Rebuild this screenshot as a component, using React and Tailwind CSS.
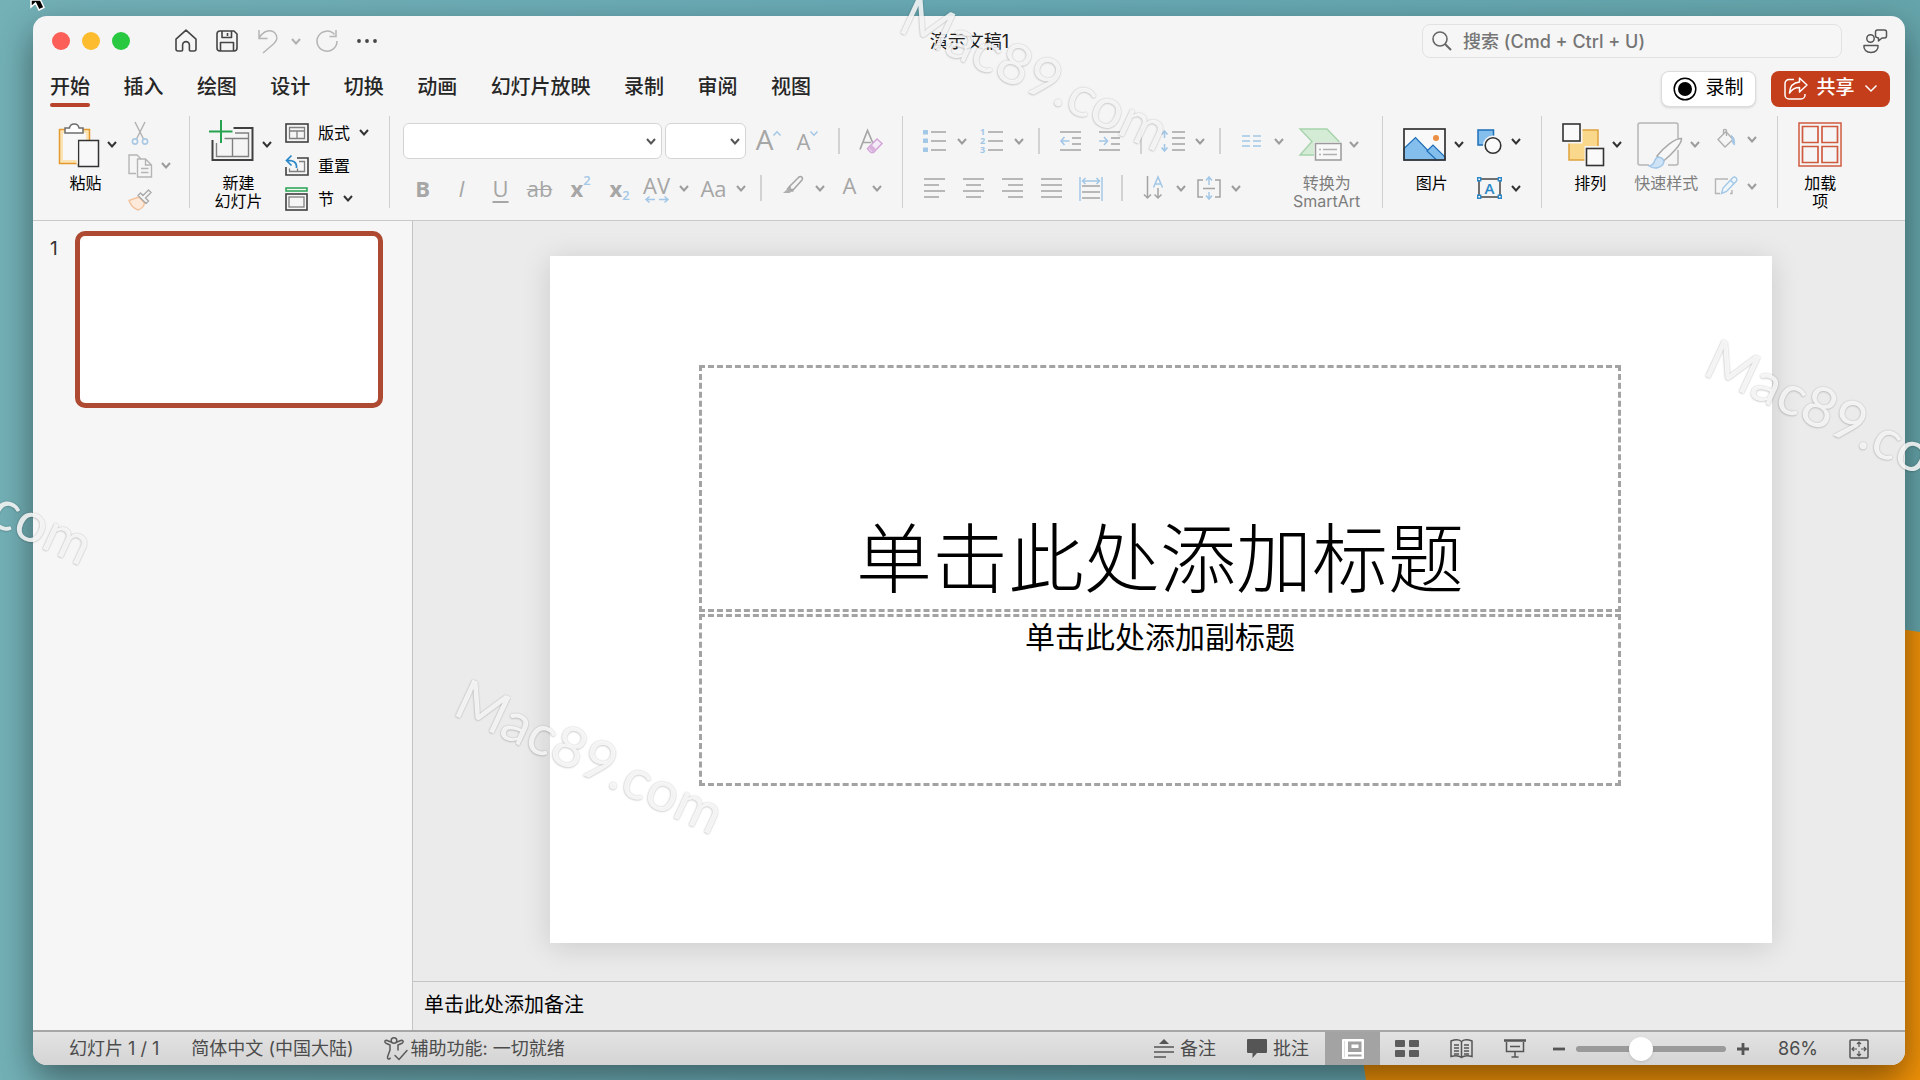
import { useState } from "react";
import clsx from "clsx";

const TABS = ["开始", "插入", "绘图", "设计", "切换", "动画", "幻灯片放映", "录制", "审阅", "视图"];

const WATERMARKS = [
  "left-[893px] -top-[19px]",
  "left-[1698px] top-[324px]",
  "left-[448px] top-[664px]",
  "-left-[183px] top-[395px]",
];

function Svg({ w, h, children, className }) {
  return (
    <svg
      width={w}
      height={h}
      viewBox={`0 0 ${w} ${h}`}
      fill="none"
      aria-hidden="true"
      className={clsx("shrink-0 overflow-visible", className)}
    >
      {children}
    </svg>
  );
}

function Chevron({ className = "text-[#333]" }) {
  return (
    <Svg w={10} h={7} className={className}>
      <path d="M1 1l4 4.5L9 1" stroke="currentColor" strokeWidth="2" />
    </Svg>
  );
}

const OFF = "text-[#9c9c9c]";

function Divider() {
  return <div className="h-[92px] w-px shrink-0 bg-[#cfcfcf]" />;
}

function SmallDivider() {
  return <div className="mx-[11px] h-[26px] w-0.5 shrink-0 bg-[#d2d2d2]" />;
}

// tool cell used in the font and paragraph groups
function Tool({ label, children, className }) {
  return (
    <button
      type="button"
      aria-label={label}
      className={clsx(
        "flex h-9 w-[39px] shrink-0 items-center justify-center font-['Open_Sans',sans-serif] text-[22px] leading-none text-[#a6a6a6]",
        className
      )}
    >
      {children}
    </button>
  );
}

function ToolArrow({ label }) {
  return (
    <button type="button" aria-label={label} className="flex h-9 w-4 shrink-0 items-center justify-center">
      <Chevron className={OFF} />
    </button>
  );
}

function BigButton({ icon, lines, arrow = true, off = false }) {
  return (
    <button type="button" className="flex shrink-0 flex-col items-center pt-1.5">
      <span className="flex h-[45px] items-center gap-2">
        {icon}
        {arrow && <Chevron className={off ? OFF : "text-[#333]"} />}
      </span>
      <span
        className={clsx(
          "mt-[7px] flex flex-col text-base leading-[18px]",
          off ? "text-[#7d7d7d]" : "text-black",
          arrow && "pr-1"
        )}
      >
        {lines.map((l) => (
          <span key={l}>{l}</span>
        ))}
      </span>
    </button>
  );
}

function SmallButton({ icon, text, label, arrow, off, className }) {
  return (
    <button
      type="button"
      aria-label={label}
      className={clsx("flex items-center gap-[9px] text-base text-black", className)}
    >
      {icon}
      {text && <span>{text}</span>}
      {arrow && <Chevron className={off ? OFF : "text-[#333]"} />}
    </button>
  );
}

/* ---------- icons ---------- */

const HomeIcon = () => (
  <Svg w={22} h={24}>
    <path
      d="M1 10.2 11 1.2l10 9V20a2 2 0 0 1-2 2h-3.6a1 1 0 0 1-1-1v-5a3.4 3.4 0 0 0-6.8 0v5a1 1 0 0 1-1 1H3a2 2 0 0 1-2-2z"
      stroke="#454545"
      strokeWidth="1.6"
      strokeLinejoin="round"
    />
  </Svg>
);

const SaveIcon = () => (
  <Svg w={22} h={22}>
    <path
      d="M1 4a3 3 0 0 1 3-3h14l3 3v14a3 3 0 0 1-3 3H4a3 3 0 0 1-3-3zM6 1v6.5h9.5V1M11.5 3v3M4.5 21v-8.500h13V21"
      stroke="#454545"
      strokeWidth="1.6"
      strokeLinejoin="round"
    />
  </Svg>
);

const UndoIcon = () => (
  <Svg w={22} h={25}>
    <path d="M2 1v8.500h8.500M2 9C6 2.500 13-.5 17.500 3.500c4 4 2.500 8-.5 11L6 24" stroke="#b5b5b5" strokeWidth="1.5" />
  </Svg>
);

const RedoIcon = () => (
  <Svg w={22} h={22}>
    <path d="M18.500 4.500A10 10 0 1 0 21 11M20 0v6.500h-6.500" stroke="#b5b5b5" strokeWidth="1.5" />
  </Svg>
);

const PasteIcon = () => (
  <Svg w={41} h={45}>
    <rect x="1.500" y="7.500" width="30" height="34" fill="#fbe3b4" stroke="#e49a2e" strokeWidth="1.5" />
    <rect x="5" y="11" width="23" height="27" fill="#f8f8f8" />
    <path d="M7 11V6h4.500a4.800 4.800 0 0 1 9.500 0H25v5z" fill="#fff" stroke="#6d6d6d" strokeWidth="1.5" />
    <rect x="20.500" y="18.500" width="20" height="26" fill="#f8f8f8" stroke="#333" strokeWidth="1.5" />
    <rect x="18.500" y="17" width="1.300" height="25" fill="#f5f5f5" />
  </Svg>
);

const CutIcon = () => (
  <Svg w={24} h={24}>
    <path d="M7 1l8.500 17M17 1L8.500 18" stroke="#b0b0b0" strokeWidth="1.400" />
    <circle cx="7" cy="20.500" r="2.600" stroke="#a9c9e4" strokeWidth="1.600" />
    <circle cx="17" cy="20.500" r="2.600" stroke="#a9c9e4" strokeWidth="1.600" />
  </Svg>
);

const CopyIcon = () => (
  <Svg w={24} h={24}>
    <path d="M8 19.500H1V1h8l4 4" stroke="#b5b5b5" strokeWidth="1.400" />
    <path d="M9.500 5h8l6 6v12h-14zM17.500 5v6h6M13 14.500h7.500M13 18.500h7.500" stroke="#b5b5b5" strokeWidth="1.400" />
  </Svg>
);

const BrushIcon = () => (
  <Svg w={24} h={24}>
    <path d="M11 10L1 13.500c1.500 4.500 5 8 9 9.500 4.500-1.500 6-4 6.500-7z" fill="#fdeadb" stroke="#f3c39d" strokeWidth="1.400" />
    <path d="M10 8.500l8 8 2.500-2.500-3-3L23 5.500 20.500 3l-5.500 5.500L12.500 6z" fill="#f5f5f5" stroke="#aaa" strokeWidth="1.400" />
  </Svg>
);

const NewSlideIcon = () => (
  <Svg w={45} h={48}>
    <path d="M24.500 7H43.500v32h-40V19" stroke="#404040" strokeWidth="2" />
    <path d="M26 12h13.500v23.500h-32V22M15.500 17.500h24M23.500 17.500v18" stroke="#808080" strokeWidth="1.400" />
    <path d="M12-1v23M0 10.500h23.500" stroke="#27a251" strokeWidth="2" />
  </Svg>
);

const LayoutIcon = () => (
  <Svg w={24} h={20}>
    <rect x="1" y="1" width="22" height="18" stroke="#404040" strokeWidth="1.600" />
    <path d="M4.500 4.500h15v11h-15zM4.500 8h15M12 8v7.500" stroke="#808080" strokeWidth="1.300" />
  </Svg>
);

const ResetIcon = () => (
  <Svg w={24} h={22}>
    <path d="M12 3h11v17H1v-8" stroke="#404040" strokeWidth="1.600" />
    <path d="M14 6.500h5.500v10h-15v-3M12.500 16.500v-3" stroke="#808080" strokeWidth="1.300" />
    <path d="M6.500.5L1.500 5.500l5 5M1.500 5.500C8 5 12 7 11.500 13" stroke="#2b88c8" strokeWidth="1.700" />
  </Svg>
);

const SectionIcon = () => (
  <Svg w={24} h={24}>
    <rect x="1" y="1" width="21" height="3" stroke="#27a251" strokeWidth="1.500" />
    <rect x="1" y="7" width="21" height="16" stroke="#404040" strokeWidth="1.600" />
    <rect x="4" y="10" width="15" height="10" stroke="#808080" strokeWidth="1.300" />
  </Svg>
);

// rows: [x1, x2, y] triples
function Lines({ w = 22, h = 22, rows, children }) {
  return (
    <Svg w={w} h={h}>
      {rows.map(([a, b, y]) => (
        <path key={`${a}-${y}`} d={`M${a} ${y}H${b}`} stroke="#a3a3a3" strokeWidth="1.500" />
      ))}
      {children}
    </Svg>
  );
}

const BLUE = "#a3c7e6";

const SmartArtIcon = () => (
  <Svg w={42} h={33}>
    <path d="M1 1h27l12 12.500L27 27H1l12-13.500z" fill="#d4ecd6" stroke="#a7d3ac" strokeWidth="1.400" />
    <rect x="15" y="14" width="29" height="20" fill="#f4f4f4" />
    <rect x="16.500" y="15.500" width="25.500" height="16.500" fill="#f8f8f8" stroke="#9a9a9a" strokeWidth="1.500" />
    <path d="M20 21.500h2M24 21.500h14M20 26.500h2M24 26.500h14" stroke="#b0b0b0" strokeWidth="1.400" />
  </Svg>
);

const PictureIcon = () => (
  <Svg w={43} h={33}>
    <rect x="1" y="1" width="41" height="31" fill="#f9f9f9" />
    <path d="M1 20.500L12.500 9.500 34 32H1z" fill="#83beec" stroke="#1e6fb8" strokeWidth="1.200" />
    <path d="M24 23l6-6 12 12v3h-8.500z" fill="#83beec" stroke="#1e6fb8" strokeWidth="1.200" />
    <circle cx="33" cy="10" r="3" fill="#ea8f43" />
    <rect x="1" y="1" width="41" height="31" stroke="#333" strokeWidth="1.700" />
  </Svg>
);

const ShapesIcon = () => (
  <Svg w={25} h={25}>
    <rect x="1" y="1" width="15.500" height="15" fill="#83beec" stroke="#1e6fb8" strokeWidth="1.500" />
    <circle cx="16" cy="16.500" r="10" fill="#f5f5f5" />
    <circle cx="16" cy="16.500" r="7.800" fill="#fafafa" stroke="#333" strokeWidth="1.600" />
  </Svg>
);

const TextBoxIcon = () => (
  <Svg w={25} h={22}>
    <rect x="2" y="2" width="21" height="18" stroke="#444" strokeWidth="1.500" />
    <text x="12.500" y="16.500" textAnchor="middle" fontSize="15" fontWeight="600" fontFamily="Open Sans" fill="#2b88c8">
      A
    </text>
    <path
      d="M.7.7h3v3h-3zM21.300.7h3v3h-3zM.7 18.300h3v3h-3zM21.300 18.300h3v3h-3z"
      fill="#fff"
      stroke="#2b88c8"
      strokeWidth="1.400"
    />
  </Svg>
);

const ArrangeIcon = () => (
  <Svg w={42} h={44}>
    <rect x="7" y="7" width="29" height="30" fill="#f9d88c" stroke="#dfa23c" strokeWidth="1.500" />
    <path d="M-1-1h21.500v21.500H-1zM22.500 23H44v22H22.500z" fill="#f5f5f5" />
    <rect x="1" y="1" width="17" height="17" fill="#fafafa" stroke="#333" strokeWidth="1.600" />
    <rect x="24.500" y="25.500" width="17" height="17" fill="#fafafa" stroke="#333" strokeWidth="1.600" />
  </Svg>
);

const QuickStyleIcon = () => (
  <Svg w={45} h={45}>
    <path d="M12 43H3a2 2 0 0 1-2-2V3a2 2 0 0 1 2-2h36a2 2 0 0 1 2 2v13M41 28v13a2 2 0 0 1-2 2h-8" stroke="#b5b5b5" strokeWidth="1.500" />
    <path d="M20 34C26 26 38 16 44.500 16.500 45 22 34 33 26.500 39z" fill="#f7f7f7" stroke="#aaa" strokeWidth="1.500" />
    <path d="M12 44c4-.5 5-2.500 6-6 2-4.500 8-3 9 1.500-1 6-9 8.500-15 4.500z" fill="#cfe3f6" stroke="#a3c7e6" strokeWidth="1.500" />
  </Svg>
);

const FillIcon = () => (
  <Svg w={24} h={20}>
    <path d="M4 10.500L12 2.500l7 8-8 7.500zM9.500 5.500V1.500c0-1.500 3-1.500 3 0V7" stroke="#b0b0b0" strokeWidth="1.400" />
    <path d="M17 6.500c3 1 4 5 3.500 9.500-2-1-2.500-4-2-6z" fill="#a3c7e6" stroke="#a3c7e6" />
  </Svg>
);

const OutlineIcon = () => (
  <Svg w={24} h={20}>
    <path d="M14 3H1.500v14.500H6M16 17.500h2V14" stroke="#b5b5b5" strokeWidth="1.400" />
    <path d="M7.500 17.500l1.500-5.500L19 1.500c2-1.500 5 1 3.500 3.500L12.500 15.500zM16.500 4l3.500 4" fill="#eef5fb" stroke="#a3c7e6" strokeWidth="1.400" />
  </Svg>
);

const AddinIcon = () => (
  <Svg w={44} h={45}>
    <rect x="1" y="1" width="42" height="43" stroke="#cf5b3f" strokeWidth="1.500" />
    <path d="M4.500 4.500h15.500v16H4.500zM24 4.500h15.500v16H24zM4.500 24.500h15.500v16H4.500zM24 24.500h15.500v16H24z" stroke="#cf5b3f" strokeWidth="1.700" />
  </Svg>
);

/* ---------- window parts ---------- */

function TitleBar() {
  return (
    <header className="flex h-[50px] items-center pr-[18px] pl-[19px]">
      <div className="flex flex-1 items-center">
        <div className="flex gap-3">
          <button type="button" aria-label="关闭" className="size-[18px] rounded-full bg-[#fc5f57]" />
          <button type="button" aria-label="最小化" className="size-[18px] rounded-full bg-[#fdbb2e]" />
          <button type="button" aria-label="缩放" className="size-[18px] rounded-full bg-[#28c840]" />
        </div>
        <div className="ml-[45px] flex items-center gap-[19px]">
          <button type="button" aria-label="主页"><HomeIcon /></button>
          <button type="button" aria-label="保存"><SaveIcon /></button>
          <button type="button" aria-label="撤消" className="flex items-center gap-3">
            <UndoIcon />
            <Chevron className="text-[#b0b0b0]" />
          </button>
          <button type="button" aria-label="恢复" className="-ml-1"><RedoIcon /></button>
          <button type="button" aria-label="更多">
            <Svg w={20} h={6}>
              <g fill="#454545">
                <circle cx="2" cy="3" r="1.900" />
                <circle cx="10" cy="3" r="1.900" />
                <circle cx="18" cy="3" r="1.900" />
              </g>
            </Svg>
          </button>
        </div>
      </div>
      <h1 className="text-[18px] text-[#1d1d1d]">演示文稿1</h1>
      <div className="flex flex-1 items-center justify-end gap-[21px]">
        <label className="flex h-[34px] w-[420px] items-center gap-3 rounded-lg border border-[#e2e2e2] bg-[#f6f6f6] pl-[9px]">
          <Svg w={19} h={20}>
            <circle cx="8" cy="8" r="7" stroke="#666" strokeWidth="1.600" />
            <path d="M13 13l6 6" stroke="#666" strokeWidth="2" />
          </Svg>
          <input
            type="search"
            aria-label="搜索"
            placeholder="搜索 (Cmd + Ctrl + U)"
            className="flex-1 bg-transparent text-[18px] font-medium outline-none placeholder:text-[#757575]"
          />
        </label>
        <button type="button" aria-label="共同创作">
          <Svg w={24} h={24}>
            <g stroke="#555" strokeWidth="1.500" strokeLinejoin="round">
              <circle cx="7.500" cy="9.500" r="3.700" />
              <path d="M1 16.500h14c.8 4-2.500 7-7 7s-7.800-3-7-7z" />
              <path d="M14.500 1h7a2 2 0 0 1 2 2v4a2 2 0 0 1-2 2H19l-3.500 3V9c-2-.3-3-1-3-2V3a2 2 0 0 1 2-2z" />
            </g>
          </Svg>
        </button>
      </div>
    </header>
  );
}

function TabRow({ tab, setTab }) {
  return (
    <div className="flex h-[42px] items-center justify-between pr-[15px] pl-[17px]">
      <nav className="flex h-full w-[761px] justify-between pb-px">
        {TABS.map((t) => (
          <button
            key={t}
            type="button"
            onClick={() => setTab(t)}
            className="flex flex-col items-center justify-end text-[20px] leading-[30px] font-medium text-[#262626]"
          >
            {t}
            <span className={clsx("mt-px h-1 w-full rounded-full", tab === t && "bg-[#b8432a]")} />
          </button>
        ))}
      </nav>
      <div className="flex gap-[15px] pt-[3px]">
        <button
          type="button"
          className="flex h-9 w-[95px] items-center justify-center gap-2 rounded-lg border border-[#dcdcdc] bg-white text-[19px] text-black shadow-sm"
        >
          <Svg w={24} h={24}>
            <circle cx="12" cy="12" r="10.800" stroke="#000" strokeWidth="1.500" />
            <circle cx="12" cy="12" r="7" fill="#000" />
          </Svg>
          录制
        </button>
        <button
          type="button"
          className="flex h-9 w-[119px] items-center justify-center gap-2 rounded-lg bg-[#c43e1c] text-[19px] font-medium text-white"
        >
          <Svg w={24} h={24}>
            <g stroke="#fff" strokeWidth="1.500" strokeLinejoin="round">
              <path d="M10 2.500H5a4 4 0 0 0-4 4V18a4 4 0 0 0 4 4h12a4 4 0 0 0 4-4v-1" />
              <path d="M15.500 1l7.500 7-7.500 7v-4.500C10.500 10.500 8 12 5.500 16c.3-6 3.500-10.500 10-11z" />
            </g>
          </Svg>
          共享
          <Svg w={12} h={7} className="ml-0.5">
            <path d="M.5.5L6 6 11.500.5" stroke="#fff" strokeWidth="1.500" />
          </Svg>
        </button>
      </div>
    </div>
  );
}

function FontGroup() {
  return (
    <div className="ml-[13px] flex flex-col gap-[11px] pt-[7px]">
      <div className="flex h-9 items-center">
        <div className="relative">
          <select
            aria-label="字体"
            className="block h-9 w-[259px] appearance-none rounded-md border border-[#d4d4d4] bg-white"
          />
          <Chevron className="pointer-events-none absolute top-[15px] right-[6px] text-[#555]" />
        </div>
        <div className="relative ml-[3px]">
          <select
            aria-label="字号"
            className="block h-9 w-[81px] appearance-none rounded-md border border-[#d4d4d4] bg-white"
          />
          <Chevron className="pointer-events-none absolute top-[15px] right-[6px] text-[#555]" />
        </div>
        <Tool label="增大字号" className="ml-[3px] pb-1 text-[28px]">
          A
          <Svg w={8} h={5} className="mb-3">
            <path d="M.5 4.500L4 .8l3.500 3.700" stroke={BLUE} strokeWidth="1.500" />
          </Svg>
        </Tool>
        <Tool label="减小字号">
          A
          <Svg w={8} h={5} className="mb-4">
            <path d="M.5.5L4 4.200 7.500.5" stroke={BLUE} strokeWidth="1.500" />
          </Svg>
        </Tool>
        <SmallDivider />
        <Tool label="清除格式">
          <Svg w={24} h={24}>
            <path d="M1 20.500L8.500 1.500l6 14M4 13.500h8" stroke="#a6a6a6" strokeWidth="1.700" />
            <path d="M9.500 18.500L18 10l5 4.500-8.500 9h-2.500l-3.500-3.500z" fill="#f5eaf7" stroke="#d3a5d9" strokeWidth="1.500" />
            <path d="M12.500 15.500l4.500 4.500-3 3.500L9.500 19z" fill="#d9b3de" />
          </Svg>
        </Tool>
      </div>
      <div className="flex h-9 items-center">
        <Tool label="加粗" className="font-bold">B</Tool>
        <Tool label="倾斜" className="font-['Noto_Serif','DejaVu_Serif',serif] italic">I</Tool>
        <Tool label="下划线" className="underline decoration-2 underline-offset-4">U</Tool>
        <Tool label="删除线" className="text-[20px] line-through decoration-1">ab</Tool>
        <Tool label="上标" className="pl-1 font-bold">
          x<span className="mb-4 text-[13px] font-semibold text-[#a3c7e6]">2</span>
        </Tool>
        <Tool label="下标" className="pl-1 font-bold">
          x<span className="-mb-3.5 text-[13px] font-semibold text-[#a3c7e6]">2</span>
        </Tool>
        <Tool label="字符间距" className="flex-col text-[20px]">
          AV
          <Svg w={24} h={7}>
            <path d="M4.500.5L1 3.500l3.500 3M1 3.500h9M19.500.5l3.500 3-3.500 3M23 3.500h-9" stroke={BLUE} strokeWidth="1.500" />
          </Svg>
        </Tool>
        <ToolArrow label="字符间距选项" />
        <Tool label="更改大小写" className="ml-0.5 text-[21px]">Aa</Tool>
        <ToolArrow label="大小写选项" />
        <SmallDivider />
        <Tool label="突出显示颜色">
          <Svg w={22} h={22} className="mb-1">
            <path d="M8 11L17 2c2-1.500 4.500 1 3 3l-8.500 9.500H8zM8 11l-2.500 3 2 2h4" stroke="#a6a6a6" strokeWidth="1.600" />
            <path d="M5.500 14L1 18h7l1-2z" fill="#b0b0b0" />
          </Svg>
        </Tool>
        <ToolArrow label="突出显示选项" />
        <Tool label="字体颜色" className="ml-0.5 pb-1.5">A</Tool>
        <ToolArrow label="字体颜色选项" />
      </div>
    </div>
  );
}

function ParagraphGroup() {
  return (
    <div className="ml-3 flex flex-col gap-[11px] pt-[7px]">
      <div className="flex h-9 items-center">
        <Tool label="项目符号">
          <Lines w={23} rows={[[8, 23, 2], [8, 23, 11], [8, 23, 20]]}>
            <path d="M0 0h5v4.500H0zM0 8.500h5V13H0zM0 17.500h5V22H0z" fill={BLUE} />
          </Lines>
        </Tool>
        <ToolArrow label="项目符号选项" />
        <Tool label="编号" className="ml-0.5">
          <Lines w={23} rows={[[8, 23, 2], [8, 23, 11], [8, 23, 20]]}>
            <g fill={BLUE} fontSize="9" fontWeight="700" fontFamily="Open Sans">
              <text x="0" y="5">1</text>
              <text x="0" y="14">2</text>
              <text x="0" y="23">3</text>
            </g>
          </Lines>
        </Tool>
        <ToolArrow label="编号选项" />
        <SmallDivider />
        <Tool label="减少缩进量">
          <Lines rows={[[0, 21, 2], [12, 21, 8], [12, 21, 14], [0, 21, 20]]}>
            <path d="M4.500 7L1 11l3.500 4M1 11h8.500" stroke={BLUE} strokeWidth="1.600" />
          </Lines>
        </Tool>
        <Tool label="增加缩进量">
          <Lines rows={[[0, 21, 2], [12, 21, 8], [12, 21, 14], [0, 21, 20]]}>
            <path d="M5 7l3.500 4L5 15M8.500 11H0" stroke={BLUE} strokeWidth="1.600" />
          </Lines>
        </Tool>
        <SmallDivider />
        <Tool label="行距">
          <Lines w={25} rows={[[12, 25, 2], [12, 25, 8], [12, 25, 14], [12, 25, 20]]}>
            <path d="M1.500 4.500l3-3.500 3 3.500M4.500 1v7M1.500 17.500l3 3.500 3-3.500M4.500 21v-7" stroke={BLUE} strokeWidth="1.600" />
          </Lines>
        </Tool>
        <ToolArrow label="行距选项" />
        <SmallDivider />
        <Tool label="分栏">
          <Svg w={19} h={12}>
            <path d="M0 1h8M11 1h8M0 6h8M11 6h8M0 11h8M11 11h8" stroke={BLUE} strokeWidth="1.500" />
          </Svg>
        </Tool>
        <ToolArrow label="分栏选项" />
      </div>
      <div className="flex h-9 items-center">
        <Tool label="左对齐">
          <Lines rows={[[0, 21, 2], [0, 15, 8], [0, 21, 14], [0, 15, 20]]} />
        </Tool>
        <Tool label="居中">
          <Lines rows={[[0, 21, 2], [3, 18, 8], [0, 21, 14], [3, 18, 20]]} />
        </Tool>
        <Tool label="右对齐">
          <Lines rows={[[0, 21, 2], [6, 21, 8], [0, 21, 14], [6, 21, 20]]} />
        </Tool>
        <Tool label="两端对齐">
          <Lines rows={[[0, 21, 2], [0, 21, 8], [0, 21, 14], [0, 21, 20]]} />
        </Tool>
        <Tool label="分散对齐">
          <Lines w={24} rows={[[3, 21, 9], [3, 21, 15], [3, 21, 21]]}>
            <path d="M1 0v24M23 0v24M6.500 1L3.500 4l3 3M17.500 1l3 3-3 3M3.500 4h17" stroke={BLUE} strokeWidth="1.500" />
          </Lines>
        </Tool>
        <SmallDivider />
        <Tool label="文字方向">
          <Svg w={21} h={24}>
            <path d="M4.500 0v22M1 18.500L4.500 22 8 18.500M15 12v10M11.500 18.500L15 22l3.500-3.500" stroke="#a3a3a3" strokeWidth="1.500" />
            <path d="M10.500 11.500L15 1l4.500 10.500M12 8h6" stroke={BLUE} strokeWidth="1.500" />
          </Svg>
        </Tool>
        <ToolArrow label="文字方向选项" />
        <Tool label="对齐文本">
          <Svg w={24} h={24}>
            <path d="M6 4H1v17h5M18 4h5v17h-5M6 12.500h12" stroke="#a3a3a3" strokeWidth="1.500" />
            <path d="M9 4.500L12 1l3 3.500M12 1v8M9 19.500l3 3.500 3-3.500M12 23v-7" stroke={BLUE} strokeWidth="1.500" />
          </Svg>
        </Tool>
        <ToolArrow label="对齐文本选项" />
      </div>
    </div>
  );
}

function Ribbon() {
  return (
    <div className="flex border-b border-[#c9c9c9] pt-2 pb-2 pl-[25px]">
      <div className="flex h-24 items-start">
        <BigButton icon={<PasteIcon />} lines={["粘贴"]} />
        <div className="mr-[18px] ml-[11px] flex flex-col">
          <SmallButton className="h-[33px]" label="剪切" icon={<CutIcon />} />
          <SmallButton className="h-[33px]" label="复制" icon={<CopyIcon />} arrow off />
          <SmallButton className="h-[33px]" label="格式刷" icon={<BrushIcon />} />
        </div>
        <Divider />

        <div className="ml-[19px] flex gap-[13px]">
          <BigButton icon={<NewSlideIcon />} lines={["新建", "幻灯片"]} />
          <div className="flex flex-col">
            <SmallButton className="h-[33px]" icon={<LayoutIcon />} text="版式" arrow />
            <SmallButton className="h-[33px]" icon={<ResetIcon />} text="重置" />
            <SmallButton className="h-[33px]" icon={<SectionIcon />} text="节" arrow />
          </div>
        </div>
        <div className="w-5" />
        <Divider />

        <FontGroup />
        <div className="w-3" />
        <Divider />

        <ParagraphGroup />
        <div className="mr-[18px] ml-1.5">
          <BigButton icon={<SmartArtIcon />} lines={["转换为", "SmartArt"]} off />
        </div>
        <Divider />

        <div className="mx-5 flex gap-[13px]">
          <BigButton icon={<PictureIcon />} lines={["图片"]} />
          <div className="flex flex-col gap-[11px] pt-[7px]">
            <SmallButton className="h-9" label="形状" icon={<ShapesIcon />} arrow />
            <SmallButton className="h-9" label="文本框" icon={<TextBoxIcon />} arrow />
          </div>
        </div>
        <Divider />

        <div className="mx-5 flex gap-3">
          <BigButton icon={<ArrangeIcon />} lines={["排列"]} />
          <BigButton icon={<QuickStyleIcon />} lines={["快速样式"]} off />
          <div className="flex flex-col gap-[11px] pt-[5px]">
            <SmallButton className="h-9" label="形状填充" icon={<FillIcon />} arrow off />
            <SmallButton className="h-9" label="形状轮廓" icon={<OutlineIcon />} arrow off />
          </div>
        </div>
        <Divider />

        <div className="ml-5">
          <BigButton icon={<AddinIcon />} lines={["加载", "项"]} arrow={false} />
        </div>
      </div>
    </div>
  );
}

function StatusBar() {
  const [zoom, setZoom] = useState(42);
  return (
    <footer className="flex h-[35px] items-center justify-between border-t-2 border-[#a6a6a6] bg-linear-to-b from-[#e3e3e3] to-[#d4d4d4] pr-9 pl-9 text-[18px] text-[#4c4c4c]">
      <div className="flex items-center">
        <span>幻灯片 1 / 1</span>
        <button type="button" className="ml-8">简体中文 (中国大陆)</button>
        <button type="button" className="ml-[30px] flex items-center gap-[3px]">
          <Svg w={24} h={24}>
            <g stroke="#5a5a5a" strokeWidth="1.500" strokeLinecap="round" strokeLinejoin="round">
              <circle cx="10" cy="3.500" r="2.800" />
              <path d="M7 5L2.500 3.200C.5 3 .3 5.500 2 6.200L6 8v5L3.500 20c-.3 2 1.800 2.800 2.700 1.200M13 5l4.500-1.800c2-.2 2.200 2.300.5 3L14 8v5" />
              <path d="M11 18.500l4 4L23 13.500" />
            </g>
          </Svg>
          辅助功能: 一切就绪
        </button>
      </div>
      <div className="flex h-full items-center">
        <button type="button" className="flex items-center gap-1.5">
          <Svg w={20} h={20}>
            <path d="M10 0l5 5H5z" fill="#555" />
            <path d="M0 8h20M0 13h20M0 18h12" stroke="#555" strokeWidth="1.600" />
          </Svg>
          备注
        </button>
        <button type="button" className="ml-[31px] flex items-center gap-1.5">
          <Svg w={20} h={19}>
            <path d="M1 0h18a1 1 0 0 1 1 1v12a1 1 0 0 1-1 1h-9l-4.500 5v-5H1a1 1 0 0 1-1-1V1a1 1 0 0 1 1-1z" fill="#555" />
          </Svg>
          批注
        </button>
        <button type="button" aria-label="普通视图" className="ml-4 flex h-full w-[55px] items-center justify-center bg-[#a3a3a3]">
          <Svg w={22} h={20}>
            <rect width="22" height="20" rx="1" fill="#fff" />
            <path d="M6 2.500h13.500v10.500H6zM6 15.500h13.500v2H6z" fill="#a0a0a0" />
            <path d="M2.500 2v16" stroke="#ddd" />
            <rect x="9.500" y="5.500" width="7" height="3.500" fill="#fff" />
          </Svg>
        </button>
        <button type="button" aria-label="幻灯片浏览" className="ml-[15px]">
          <Svg w={24} h={17}>
            <g fill="#5c5c5c">
              <rect width="10" height="7" rx="1" />
              <rect x="14" width="10" height="7" rx="1" />
              <rect y="10" width="10" height="7" rx="1" />
              <rect x="14" y="10" width="10" height="7" rx="1" />
            </g>
          </Svg>
        </button>
        <button type="button" aria-label="阅读视图" className="ml-[31px]">
          <Svg w={23} h={20}>
            <path d="M1 2c4-1.500 8-1.500 10.500.5C14 .5 18 .5 22 2v15.500c-4-1-8-1-10.500 1-2.500-2-6.500-2-10.500-1zM11.500 2.500v16" stroke="#555" strokeWidth="1.500" />
            <path d="M4 6h5M4 9h5M4 12h5M4 15h5M14 6h5M14 9h5M14 12h5M14 15h5" stroke="#555" strokeWidth="1.300" />
          </Svg>
        </button>
        <button type="button" aria-label="幻灯片放映" className="ml-[31px]">
          <Svg w={22} h={19}>
            <path d="M0 1.500h22" stroke="#555" strokeWidth="2.500" />
            <path d="M2.500 3v9.500h17V3M6 7.500h10M11 12.500V18M7.500 18h7" stroke="#555" strokeWidth="1.500" />
          </Svg>
        </button>
        <button type="button" aria-label="缩小" className="ml-[27px]">
          <Svg w={12} h={12}>
            <path d="M0 6h12" stroke="#555" strokeWidth="2.800" />
          </Svg>
        </button>
        <input
          type="range"
          aria-label="缩放级别"
          value={zoom}
          onChange={(e) => setZoom(e.target.value)}
          className="mx-[11px] h-6 w-[150px] appearance-none bg-transparent [&::-webkit-slider-runnable-track]:h-1.5 [&::-webkit-slider-runnable-track]:rounded-full [&::-webkit-slider-runnable-track]:bg-[#9a9a9a] [&::-webkit-slider-thumb]:-mt-[9px] [&::-webkit-slider-thumb]:size-6 [&::-webkit-slider-thumb]:appearance-none [&::-webkit-slider-thumb]:rounded-full [&::-webkit-slider-thumb]:bg-white [&::-webkit-slider-thumb]:shadow"
        />
        <button type="button" aria-label="放大">
          <Svg w={12} h={12}>
            <path d="M0 6h12M6 0v12" stroke="#555" strokeWidth="2.800" />
          </Svg>
        </button>
        <span className="ml-[29px]">86%</span>
        <button type="button" aria-label="适应窗口" className="ml-[31px]">
          <Svg w={20} h={20}>
            <rect x="1" y="1" width="18" height="18" rx="1" stroke="#555" strokeWidth="1.500" />
            <path d="M10 3v5M10 12v5M3 10h5M12 10h5M8 5l2-2 2 2M8 15l2 2 2-2M5 8l-2 2 2 2M15 8l2 2-2 2" stroke="#555" strokeWidth="1.200" />
          </Svg>
        </button>
      </div>
    </footer>
  );
}

export default function App() {
  const [tab, setTab] = useState("开始");

  return (
    <div className="relative flex h-screen overflow-hidden bg-linear-to-r from-[#73b1b7] via-[#68aab5] to-[#65a5ab] pt-4 pr-[15px] pb-[15px] pl-[33px] font-['Inter','Noto_Sans_CJK_SC',sans-serif]">
      <svg className="absolute right-0 bottom-0" width="560" height="460" viewBox="0 0 560 460" aria-hidden="true">
        <path d="M6 460C-40 200 250-40 560 12V460z" fill="#f09208" />
      </svg>

      <div className="relative flex min-w-0 flex-1 flex-col overflow-hidden rounded-[14px] bg-[#f5f5f5] shadow-[0_14px_36px_rgba(0,0,0,0.45)]">
        <TitleBar />
        <TabRow tab={tab} setTab={setTab} />
        <Ribbon />

        <div className="flex min-h-0 flex-1">
          <aside className="flex w-[380px] shrink-0 items-start border-r border-[#c4c4c4] bg-[#f6f6f6] pt-2.5 pl-[17px]">
            <span className="w-[25px] pt-1 text-[19px] text-[#333]">1</span>
            <button
              type="button"
              aria-label="幻灯片 1"
              className="aspect-[308/177] w-[308px] rounded-[10px] border-[5px] border-[#ad4a31] bg-white"
            />
          </aside>

          <div className="flex min-w-0 flex-1 flex-col bg-[#ebebeb]">
            <main className="min-h-0 flex-1 overflow-hidden pt-[35px] pr-[133px] pl-[137px]">
              <section className="flex aspect-video w-full flex-col bg-white pr-[151px] pl-[149px] pt-[109px] shadow-[0_4px_28px_rgba(0,0,0,0.14)]">
                <h2 className="flex h-[247px] items-end justify-center border-3 border-dashed border-[#a3a3a3] pb-[7px] text-[76px] leading-[86px] font-light text-black">
                  单击此处添加标题
                </h2>
                <p className="mt-0.5 h-[172px] border-3 border-dashed border-[#a3a3a3] pt-0.5 text-center text-[30px] leading-9 text-black">
                  单击此处添加副标题
                </p>
              </section>
            </main>
            <div className="border-t border-[#c4c4c4] px-[11px] pt-[7px] pb-[9px] text-[20px] leading-8 text-black">单击此处添加备注</div>
          </div>
        </div>

        <StatusBar />
      </div>

      {/* mouse pointer */}
      <svg className="absolute top-0 left-[30px]" width="18" height="11" viewBox="0 0 18 11" aria-hidden="true">
        <path d="M1 0v7l4.500-4 3.500 7 5-2.500L10.500 0z" fill="#000" stroke="#fff" strokeWidth="1.500" />
      </svg>

      {WATERMARKS.map((pos) => (
        <span
          key={pos}
          className={clsx(
            "pointer-events-none absolute origin-bottom-left rotate-[25deg] font-['Lato',sans-serif] text-[56px] leading-none whitespace-nowrap text-white/85 [text-shadow:0_0_2px_rgba(0,0,0,0.22),0_1px_2px_rgba(0,0,0,0.12)]",
            pos
          )}
        >
          Mac89.com
        </span>
      ))}
    </div>
  );
}
